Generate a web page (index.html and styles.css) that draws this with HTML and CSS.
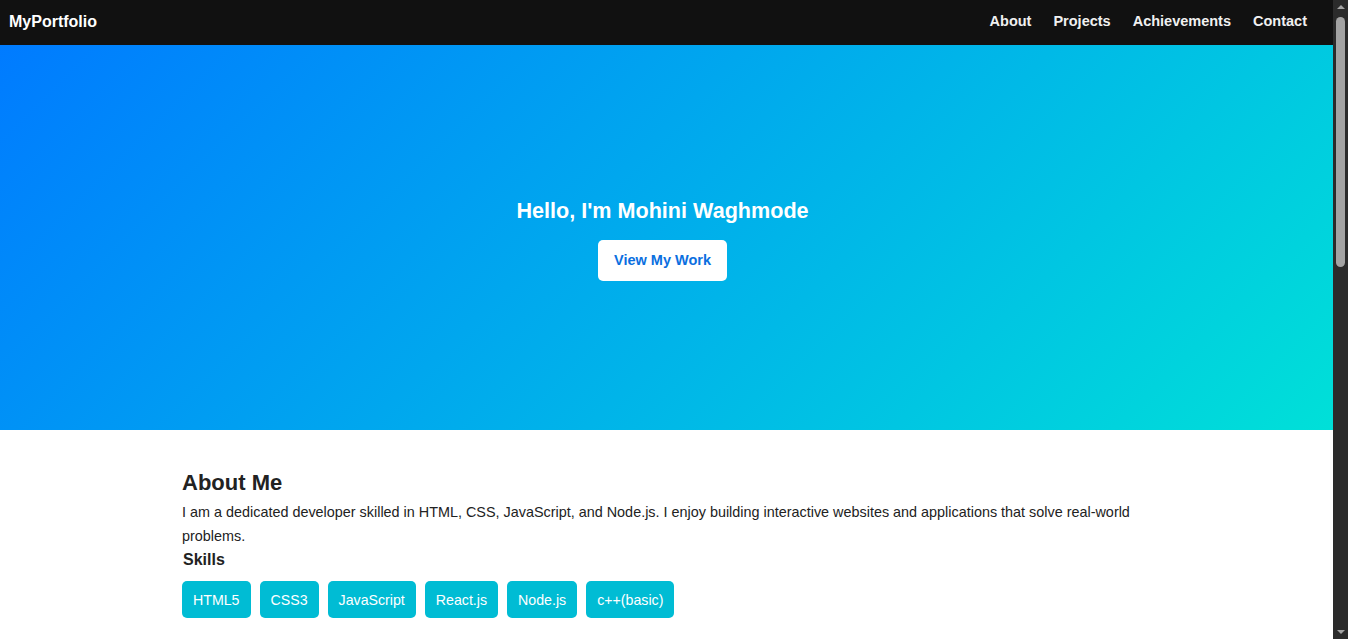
FILE: index.html
```html
<!DOCTYPE html>
<html lang="en">
<head>
<meta charset="UTF-8">
<title>MyPortfolio</title>
<link rel="stylesheet" href="styles.css">
</head>
<body>
<header class="navbar">
  <div class="logo">MyPortfolio</div>
  <nav class="nav-links">
    <a href="#about">About</a>
    <a href="#projects">Projects</a>
    <a href="#achievements">Achievements</a>
    <a href="#contact">Contact</a>
  </nav>
</header>
<section class="hero">
  <h1>Hello, I'm Mohini Waghmode</h1>
  <a class="btn" href="#projects">View My Work</a>
</section>
<section class="about" id="about">
  <h2>About Me</h2>
  <p>I am a dedicated developer skilled in HTML, CSS, JavaScript, and Node.js. I enjoy building interactive websites and applications that solve real-world problems.</p>
  <h3>Skills</h3>
  <div class="skills">
    <span class="skill">HTML5</span>
    <span class="skill">CSS3</span>
    <span class="skill">JavaScript</span>
    <span class="skill">React.js</span>
    <span class="skill">Node.js</span>
    <span class="skill">c++(basic)</span>
  </div>
</section>
<section class="projects" id="projects">
  <h2>Projects</h2>
  <p>Coming soon.</p>
</section>
<div class="scrollbar" aria-hidden="true">
  <span class="arrow up"></span>
  <span class="thumb"></span>
  <span class="arrow down"></span>
</div>
</body>
</html>
```
FILE: styles.css
```css
body {
  margin: 0 15px 0 0;
  font-family: "Liberation Sans", Arial, sans-serif;
  background: #fff;
  color: #222;
}
.navbar {
  box-sizing: border-box;
  height: 45px;
  background: #111;
  display: flex;
  align-items: center;
  justify-content: space-between;
  padding: 0 26px 2px 9px;
}
.logo {
  color: #fff;
  font-weight: bold;
  font-size: 16px;
}
.nav-links {
  display: flex;
  gap: 22px;
  margin-bottom: 1px;
}
.nav-links a {
  color: #f0f0f0;
  font-weight: bold;
  font-size: 14.5px;
  text-decoration: none;
}
.hero {
  box-sizing: border-box;
  height: 385px;
  padding: 3px 8px 0 0;
  background: linear-gradient(135deg, #007bff, #00e0d8);
  display: flex;
  flex-direction: column;
  align-items: center;
  justify-content: center;
  color: #fff;
}
.hero h1 {
  margin: 0 0 16px;
  font-size: 21.6px;
  font-weight: bold;
}
.btn {
  background: #fff;
  color: #0b6fdf;
  font-weight: bold;
  font-size: 14.5px;
  padding: 12.5px 16px;
  border-radius: 5px;
  text-decoration: none;
}
.about, .projects {
  box-sizing: border-box;
  max-width: 1000px;
  margin: 0 auto;
  padding: 40px 15.5px 20px;
  background: #fff;
  color: #222;
}
.about h2 {
  font-size: 22px;
  margin: 0 0 4px;
}
.about p {
  font-size: 14.4px;
  line-height: 24px;
  margin: 0;
}
.about h3 {
  font-size: 16px;
  margin: 3px 0 12px 1px;
}
.skills {
  display: flex;
  gap: 9px;
}
.skill {
  background: #00bcd4;
  color: #fff;
  font-size: 14.2px;
  padding: 10.5px 11px;
  border-radius: 5px;
}
.projects h2 {
  font-size: 22px;
}
.scrollbar {
  position: fixed;
  top: 0;
  right: 0;
  width: 15px;
  height: 100vh;
  background: #2b2b2b;
  display: flex;
  flex-direction: column;
  align-items: center;
}
.arrow {
  width: 0;
  height: 0;
  border-left: 4px solid transparent;
  border-right: 4px solid transparent;
  margin: 5px 0;
}
.arrow.up {
  border-bottom: 4px solid #a3a3a3;
}
.arrow.down {
  border-top: 4px solid #a3a3a3;
  margin-top: auto;
}
.thumb {
  width: 9px;
  height: 250px;
  margin-top: 3px;
  background: #a3a3a3;
  border-radius: 5px;
}
```
